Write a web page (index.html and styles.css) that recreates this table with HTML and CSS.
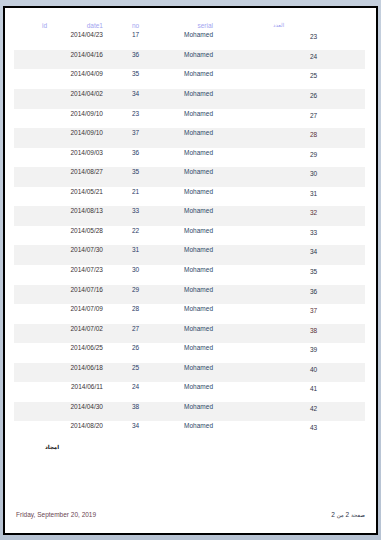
FILE: index.html
```html
<!DOCTYPE html>
<html lang="ar">
<head>
<meta charset="utf-8">
<title>Report page 2</title>
<link rel="stylesheet" href="styles.css">
</head>
<body>
<div class="page">
  <div class="report">
    <div class="row head">
      <div class="c id">id</div>
      <div class="c date">date1</div>
      <div class="c gap"></div>
      <div class="c no">no</div>
      <div class="c serial">serial</div>
      <div class="c num head-ar">العدد</div>
    </div>
    <div class="row"><div class="c id"></div><div class="c date">2014/04/23</div><div class="c gap"></div><div class="c no">17</div><div class="c serial">Mohamed</div><div class="c num">23</div></div>
    <div class="row"><div class="c id"></div><div class="c date">2014/04/16</div><div class="c gap"></div><div class="c no">36</div><div class="c serial">Mohamed</div><div class="c num">24</div></div>
    <div class="row"><div class="c id"></div><div class="c date">2014/04/09</div><div class="c gap"></div><div class="c no">35</div><div class="c serial">Mohamed</div><div class="c num">25</div></div>
    <div class="row"><div class="c id"></div><div class="c date">2014/04/02</div><div class="c gap"></div><div class="c no">34</div><div class="c serial">Mohamed</div><div class="c num">26</div></div>
    <div class="row"><div class="c id"></div><div class="c date">2014/09/10</div><div class="c gap"></div><div class="c no">23</div><div class="c serial">Mohamed</div><div class="c num">27</div></div>
    <div class="row"><div class="c id"></div><div class="c date">2014/09/10</div><div class="c gap"></div><div class="c no">37</div><div class="c serial">Mohamed</div><div class="c num red">28</div></div>
    <div class="row"><div class="c id"></div><div class="c date">2014/09/03</div><div class="c gap"></div><div class="c no">36</div><div class="c serial">Mohamed</div><div class="c num">29</div></div>
    <div class="row"><div class="c id"></div><div class="c date">2014/08/27</div><div class="c gap"></div><div class="c no">35</div><div class="c serial">Mohamed</div><div class="c num">30</div></div>
    <div class="row"><div class="c id"></div><div class="c date">2014/05/21</div><div class="c gap"></div><div class="c no">21</div><div class="c serial">Mohamed</div><div class="c num">31</div></div>
    <div class="row"><div class="c id"></div><div class="c date">2014/08/13</div><div class="c gap"></div><div class="c no">33</div><div class="c serial">Mohamed</div><div class="c num red">32</div></div>
    <div class="row"><div class="c id"></div><div class="c date">2014/05/28</div><div class="c gap"></div><div class="c no">22</div><div class="c serial">Mohamed</div><div class="c num">33</div></div>
    <div class="row"><div class="c id"></div><div class="c date">2014/07/30</div><div class="c gap"></div><div class="c no">31</div><div class="c serial">Mohamed</div><div class="c num">34</div></div>
    <div class="row"><div class="c id"></div><div class="c date">2014/07/23</div><div class="c gap"></div><div class="c no">30</div><div class="c serial">Mohamed</div><div class="c num">35</div></div>
    <div class="row"><div class="c id"></div><div class="c date">2014/07/16</div><div class="c gap"></div><div class="c no">29</div><div class="c serial">Mohamed</div><div class="c num">36</div></div>
    <div class="row"><div class="c id"></div><div class="c date">2014/07/09</div><div class="c gap"></div><div class="c no">28</div><div class="c serial">Mohamed</div><div class="c num red">37</div></div>
    <div class="row"><div class="c id"></div><div class="c date">2014/07/02</div><div class="c gap"></div><div class="c no">27</div><div class="c serial">Mohamed</div><div class="c num red">38</div></div>
    <div class="row"><div class="c id"></div><div class="c date">2014/06/25</div><div class="c gap"></div><div class="c no">26</div><div class="c serial">Mohamed</div><div class="c num">39</div></div>
    <div class="row"><div class="c id"></div><div class="c date">2014/06/18</div><div class="c gap"></div><div class="c no">25</div><div class="c serial">Mohamed</div><div class="c num">40</div></div>
    <div class="row"><div class="c id"></div><div class="c date">2014/06/11</div><div class="c gap"></div><div class="c no">24</div><div class="c serial">Mohamed</div><div class="c num">41</div></div>
    <div class="row"><div class="c id"></div><div class="c date">2014/04/30</div><div class="c gap"></div><div class="c no">38</div><div class="c serial">Mohamed</div><div class="c num">42</div></div>
    <div class="row"><div class="c id"></div><div class="c date">2014/08/20</div><div class="c gap"></div><div class="c no">34</div><div class="c serial">Mohamed</div><div class="c num">43</div></div>
  </div>
  <div class="total">امجاد</div>
  <div class="footer">
    <span class="printed">Friday, September 20, 2019</span>
    <span class="pager" dir="rtl"><span class="ar">صفحة</span> 2 <span class="ar">من</span> 2</span>
  </div>
</div>
</body>
</html>
```

FILE: styles.css
```css
html, body {
  margin: 0;
  height: 540px;
}
body {
  box-sizing: border-box;
  padding: 6px 3px 5px 3px;
  background: linear-gradient(180deg, #c4cfdd 0%, #b7c3d3 100%);
  font-family: "Liberation Sans", Arial, sans-serif;
  font-size: 6.5px;
  line-height: 8px;
  overflow: hidden;
}
.page {
  box-sizing: border-box;
  height: 100%;
  background: #ffffff;
  border: 2px solid #000000;
  display: flex;
  flex-direction: column;
  padding: 12px 11px 14px 9px;
}
.report {
  display: flex;
  flex-direction: column;
}
.row {
  display: grid;
  grid-template-columns: 34px 56px 28px 20px 61px 1fr;
  height: 19.56px;
  color: #3a3236;
}
.row:nth-child(odd) {
  background: #f2f2f2;
}
.row.head {
  height: 10.4px;
  background: transparent;
}
.c {
  white-space: nowrap;
  padding-top: 1px;
}
.head .c {
  padding-top: 1.5px;
  color: #a2a4f0;
}
.id {
  text-align: right;
  padding-right: 1px;
}
.date {
  text-align: right;
  padding-right: 1px;
}
.no {
  text-align: left;
  color: #2b3a66;
}
.serial {
  text-align: right;
  color: #2c4868;
}
.num {
  padding-left: 97px;
  padding-top: 3px;
  color: #2e3448;
}
.num.red {
  color: #5a3038;
}
.head .head-ar {
  padding-left: 60px;
  padding-top: 0.5px;
  font-family: "DejaVu Sans", sans-serif;
  font-size: 5.5px;
}
.total {
  margin-top: 2.5px;
  padding-left: 31px;
  font-family: "DejaVu Sans", sans-serif;
  font-size: 5.5px;
  font-weight: bold;
  color: #111111;
}
.footer {
  margin-top: auto;
  display: flex;
  justify-content: space-between;
  padding-left: 2px;
  color: #6a4552;
}
.pager {
  color: #2e3448;
  white-space: nowrap;
}
.pager .ar {
  font-family: "DejaVu Sans", sans-serif;
  font-size: 5.5px;
}
```
